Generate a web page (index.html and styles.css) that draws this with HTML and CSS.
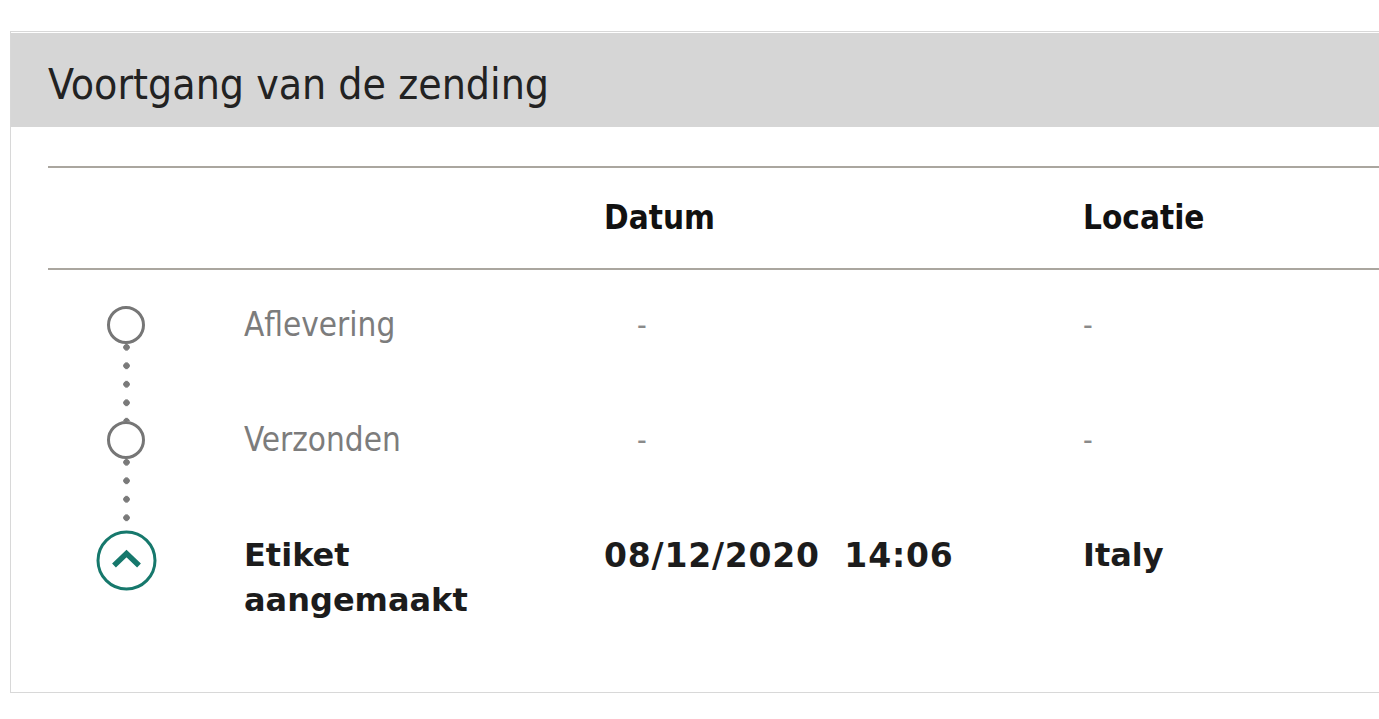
FILE: index.html
```html
<!DOCTYPE html>
<html lang="nl">
<head>
<meta charset="utf-8">
<title>Voortgang van de zending</title>
<link rel="stylesheet" href="styles.css">
</head>
<body>
<section class="panel">
  <h2 class="panel-title">Voortgang van de zending</h2>
  <div class="track">
    <div class="track-head">
      <div></div>
      <div></div>
      <div class="th">Datum</div>
      <div class="th">Locatie</div>
    </div>
    <div class="step step-pending">
      <div class="marker">
        <span class="ring"></span>
        <span class="conn"></span>
      </div>
      <div class="label">Aflevering</div>
      <div class="date dash">-</div>
      <div class="loc">-</div>
    </div>
    <div class="step step-pending">
      <div class="marker">
        <span class="ring"></span>
        <span class="conn"></span>
      </div>
      <div class="label">Verzonden</div>
      <div class="date dash">-</div>
      <div class="loc">-</div>
    </div>
    <div class="step step-current">
      <div class="marker">
        <span class="ring-current">
          <svg viewBox="0 0 61 61" width="61" height="61" aria-hidden="true">
            <circle cx="30.5" cy="30.5" r="28.5" fill="none" stroke="#16786c" stroke-width="3"/>
            <path d="M18 35.5 L30.5 23.5 L43 35.5" fill="none" stroke="#16786c" stroke-width="5.5" stroke-linecap="butt" stroke-linejoin="miter"/>
          </svg>
        </span>
      </div>
      <div class="label">Etiket<br>aangemaakt</div>
      <div class="date">08/12/2020&nbsp;&nbsp;14:06</div>
      <div class="loc">Italy</div>
    </div>
  </div>
</section>
</body>
</html>
```

FILE: styles.css
```css
html, body {
  margin: 0;
  background: #ffffff;
}
body {
  padding: 31px 0 0 10px;
  overflow: hidden;
  font-family: "DejaVu Sans", Tahoma, sans-serif;
  color: #1c1c1c;
}
.panel {
  border: 1px solid #d8d8d8;
  border-right: none;
  padding-top: 1px;
  height: 662px;
  box-sizing: border-box;
}
.panel-title {
  margin: 0;
  background: #d6d6d6;
  height: 94px;
  box-sizing: border-box;
  padding: 9px 0 0 37px;
  font-weight: normal;
  font-stretch: condensed;
  font-size: 42.4px;
  line-height: 85px;
  color: #222;
}
.track {
  margin: 39px 0 0 37px;
}
.track-head,
.step {
  display: grid;
  grid-template-columns: 156px 400px 479px 1fr;
}
.track-head {
  border-top: 2px solid #aaa69f;
  border-bottom: 2px solid #aaa69f;
  height: 104px;
  box-sizing: border-box;
  align-items: center;
}
.th {
  font-weight: bold;
  font-stretch: condensed;
  font-size: 33px;
  color: #111;
  padding-bottom: 2px;
}
.marker {
  display: flex;
  flex-direction: column;
  align-items: center;
}
.ring {
  width: 38px;
  height: 38px;
  box-sizing: border-box;
  border: 3px solid #767676;
  border-radius: 50%;
}
.conn {
  width: 7px;
  background-image: radial-gradient(circle, #7a7a7a 3px, transparent 3.5px);
  background-size: 7px 18.5px;
  background-position: 0 -6px;
}
.step:nth-of-type(2) {
  margin-top: 36px;
}
.step:nth-of-type(2) .conn {
  height: 77px;
}
.step:nth-of-type(3) .conn {
  height: 71px;
}
.label,
.date,
.loc {
  font-size: 33px;
  font-stretch: condensed;
  line-height: 38px;
}
.label {
  padding-left: 40px;
}
.step-pending .label {
  color: #7c7c7c;
}
.step-pending .date,
.step-pending .loc {
  color: #8a8a8a;
  font-size: 30px;
}
.dash {
  padding-left: 33px;
}
.ring-current {
  display: block;
  width: 61px;
  height: 61px;
}
.ring-current svg {
  display: block;
}
.step-current .label,
.step-current .date,
.step-current .loc {
  font-weight: bold;
  font-stretch: normal;
  font-size: 32px;
  line-height: 45px;
  padding-top: 3px;
  color: #1c1c1c;
}
.step-current .date {
  font-size: 33px;
  letter-spacing: 0.8px;
}
```
